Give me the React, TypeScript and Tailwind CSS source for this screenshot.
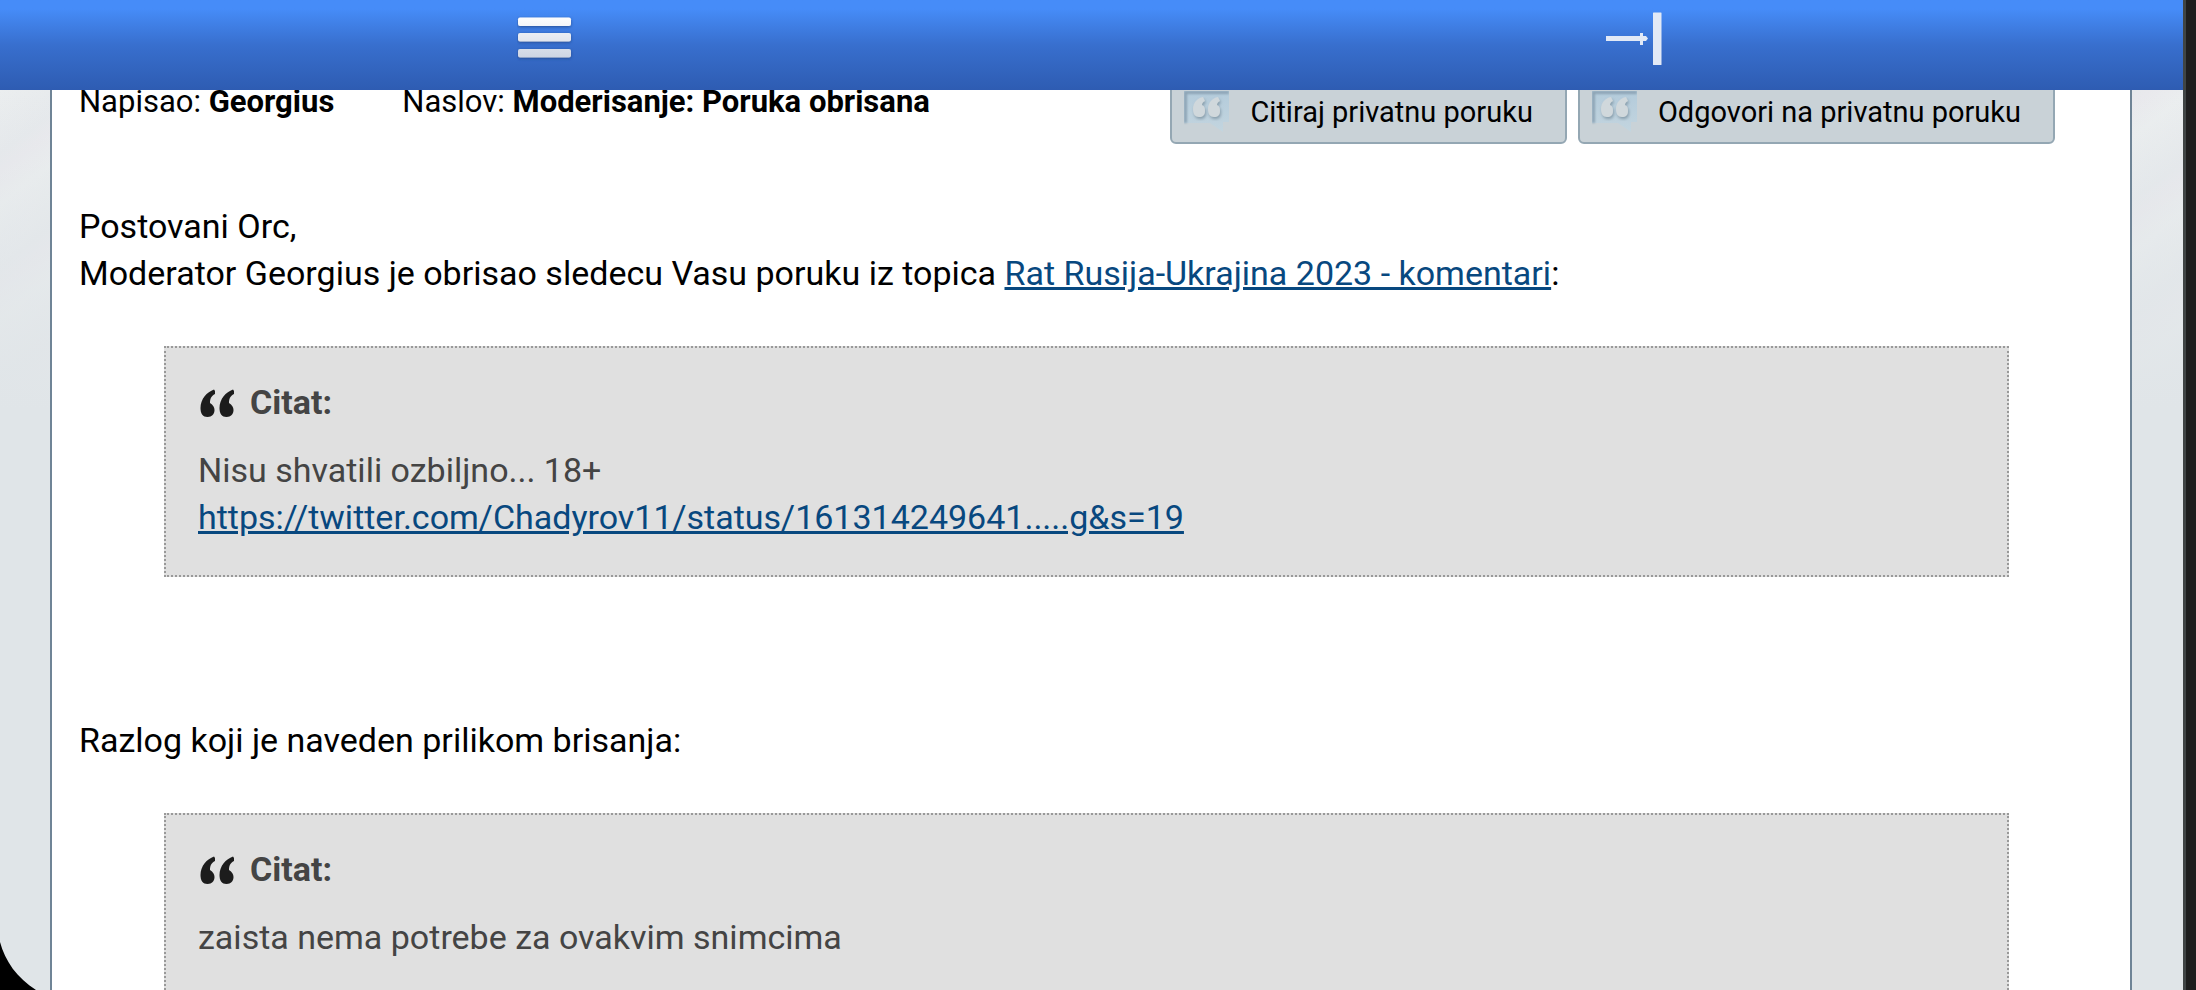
import type { ReactNode } from 'react'

interface QuoteProps {
  children: ReactNode
}

interface ReplyButtonProps {
  label: string
}

function MenuIcon() {
  return (
    <svg viewBox="0 0 58 46" className="h-[46px] w-[58px]" aria-hidden="true">
      <defs>
        <linearGradient id="bars" x1="0" y1="0" x2="0" y2="46" gradientUnits="userSpaceOnUse">
          <stop offset="0" stopColor="#ffffff" />
          <stop offset="1" stopColor="#c8d0e0" />
        </linearGradient>
        <filter id="bars-shadow" x="-20%" y="-20%" width="140%" height="140%">
          <feDropShadow dx="0" dy="1" stdDeviation="1.4" floodColor="#1c3c78" floodOpacity="0.7" />
        </filter>
      </defs>
      <g fill="url(#bars)" filter="url(#bars-shadow)">
        <rect x="1" y="1.5" width="53" height="8.5" rx="2" />
        <rect x="1" y="17" width="53" height="8.5" rx="2" />
        <rect x="1" y="33" width="53" height="8.5" rx="2" />
      </g>
    </svg>
  )
}

function JumpIcon() {
  return (
    <svg viewBox="0 0 62 54" className="h-[54px] w-[62px]" fill="#e2e9f6" aria-hidden="true">
      <path d="M0 24h34v-3h3v3h3l2 2.500-2 2.500h-3v4h-3v-4H0z" />
      <rect x="47" y="0.500" width="8.500" height="52.500" rx="0.500" />
    </svg>
  )
}

function QuoteMark() {
  return (
    <svg viewBox="0 -1 38 30" className="h-[30px] w-[38px]" fill="#1c1c1c" aria-hidden="true">
      <defs>
        <filter id="ink" x="-10%" y="-10%" width="120%" height="120%">
          <feGaussianBlur stdDeviation="0.7" />
        </filter>
      </defs>
      <g filter="url(#ink)">
        <path d="M17 2l-1-1.500C9 3 2.500 10 2.500 19c0 6 2.500 9 7 9s7-3 7-7c0-3-1.500-5-4.500-7 0-4 1-7 5-9z" />
        <path d="M36 2l-1-1.500C28 3 21.500 10 21.500 19c0 6 2.500 9 7 9s7-3 7-7c0-3-1.500-5-4.500-7 0-4 1-7 5-9z" />
      </g>
    </svg>
  )
}

function BubbleIcon() {
  return (
    <svg viewBox="0 0 45 42" className="h-[42px] w-[45px]" aria-hidden="true">
      <defs>
        <linearGradient id="bubble" x1="0" y1="0" x2="0" y2="1">
          <stop offset="0" stopColor="#b3cbdb" />
          <stop offset="1" stopColor="#c3d5df" />
        </linearGradient>
        <filter id="soft" x="-20%" y="-20%" width="140%" height="140%">
          <feDropShadow dx="1" dy="2" stdDeviation="1.5" floodColor="#7a909f" floodOpacity="0.8" />
        </filter>
        <filter id="edge" x="-20%" y="-20%" width="140%" height="140%">
          <feGaussianBlur stdDeviation="0.8" />
        </filter>
      </defs>
      <path d="M0 0h45v31h-6v10L26 32H0z" fill="url(#bubble)" />
      <path d="M0 0h45v3H3v29H0z" fill="#8ba3b4" filter="url(#edge)" />
      <g fill="#d0d8dc" filter="url(#soft)">
        <path d="M19 6c-6 1-10 6-10 12 0 5 2 8 6 8s6-2 6-6-1-5-3-6c0-2 1-3 3-4z" />
        <path d="M34 6c-6 1-10 6-10 12 0 5 2 8 6 8s6-2 6-6-1-5-3-6c0-2 1-3 3-4z" />
      </g>
    </svg>
  )
}

function ReplyButton({ label }: ReplyButtonProps) {
  return (
    <button
      type="button"
      className="flex h-[68px] items-center gap-[21px] rounded-md border-2 border-[#94a7b3] bg-[#c9d2d7] pt-[3px] pr-8 pl-3 text-[29px] leading-[46px] text-black"
    >
      <BubbleIcon />
      {label}
    </button>
  )
}

function Quote({ children }: QuoteProps) {
  return (
    <blockquote className="mr-[121px] ml-[85px] border-2 border-dotted border-[#999] bg-[#e0e0e0] px-8 pt-[31px] pb-[34px] text-[#444]">
      <div className="mb-[21px] flex items-center gap-[14px] font-bold">
        <QuoteMark />
        Citat:
      </div>
      {children}
    </blockquote>
  )
}

export default function App() {
  return (
    <div className="flex h-screen overflow-hidden bg-[#1e1e1e] pr-[10px] font-['Roboto','Liberation_Sans',sans-serif]">
      <div className="relative flex flex-1 flex-col border-r-[3px] border-[#404545] bg-[#e0e5e8]">
        <header className="relative z-10 flex h-[90px] shrink-0 bg-linear-to-b from-[#468cf8] from-10% via-[#386fce] via-50% to-[#2e5cb2]">
          <button type="button" aria-label="Meni" className="flex flex-1 items-start justify-center pt-4">
            <MenuIcon />
          </button>
          <button type="button" aria-label="Idi na kraj" className="flex flex-1 items-start justify-center pt-3">
            <JumpIcon />
          </button>
        </header>

        <div className="flex min-h-0 flex-1 bg-[linear-gradient(to_bottom,rgba(224,229,232,0)_0,#e0e5e8_320px),repeating-linear-gradient(142deg,#ebeeef_0,#e6e9ec_50px,#e9e9ed_64px,#ebeeef_90px)] pr-[51px] pl-[50px]">
          <main className="min-w-0 flex-1 border-x-2 border-[#6f8496] bg-white pl-[27px] text-[34px] leading-[47px] text-black">
            {/* Message header, partly scrolled under the toolbar */}
            <div className="-mt-[14px] mb-[59px] flex items-end justify-between pr-[75px]">
              <div className="flex gap-[68px] self-start pt-[2px] text-[31px]">
                <span>
                  Napisao: <b>Georgius</b>
                </span>
                <span>
                  Naslov: <b>Moderisanje: Poruka obrisana</b>
                </span>
              </div>
              <div className="flex gap-[11px]">
                <ReplyButton label="Citiraj privatnu poruku" />
                <ReplyButton label="Odgovori na privatnu poruku" />
              </div>
            </div>

            <p className="mb-[49px]">
              Postovani Orc,
              <br />
              Moderator Georgius je obrisao sledecu Vasu poruku iz topica{' '}
              <a href="#" className="text-[#08487f] underline">
                Rat Rusija-Ukrajina 2023 - komentari
              </a>
              :
            </p>

            <Quote>
              <p>Nisu shvatili ozbiljno... 18+</p>
              <a href="#" className="block text-[#08487f] underline">
                https://twitter.com/Chadyrov11/status/161314249641.....g&amp;s=19
              </a>
            </Quote>

            <p className="mt-[140px] mb-[49px]">Razlog koji je naveden prilikom brisanja:</p>

            <Quote>
              <p>zaista nema potrebe za ovakvim snimcima</p>
            </Quote>
          </main>
        </div>

        {/* Rounded display corner */}
        <svg viewBox="0 0 36 48" className="absolute bottom-0 left-0 h-12 w-9" aria-hidden="true">
          <path d="M0 0C5 19 17 36 36 48H0z" fill="#000" />
        </svg>
      </div>
    </div>
  )
}
